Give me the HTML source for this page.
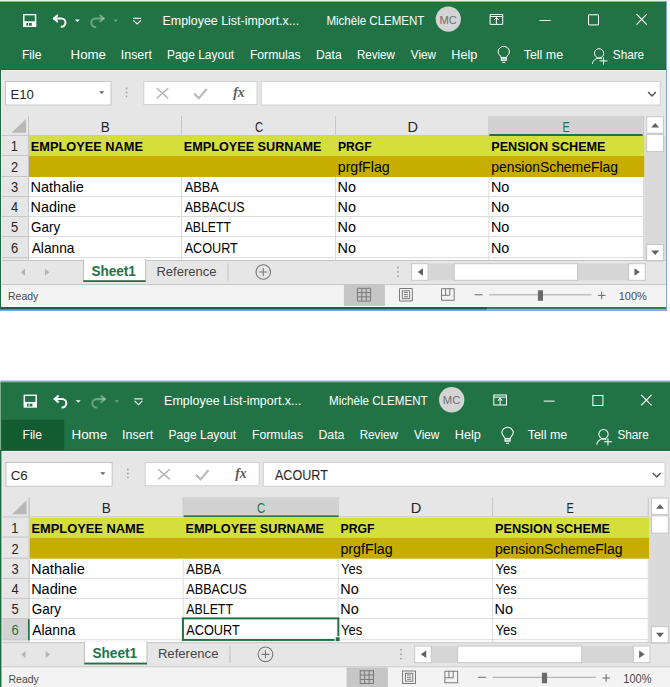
<!DOCTYPE html><html><head><meta charset="utf-8"><style>html,body{margin:0;padding:0;background:#fff;overflow:hidden}</style></head><body><svg width="670" height="687" viewBox="0 0 670 687" style="display:block">
<rect x="0" y="0" width="670" height="687" fill="#fff" />
<rect x="0.00" y="0.00" width="667.00" height="1.00" fill="#e4ebf5" />
<rect x="0.00" y="1.00" width="667.00" height="1.00" fill="#8fb0dd" />
<g><rect x="0.00" y="2.00" width="666.00" height="68.00" fill="#217346" />
<rect x="0.00" y="2.00" width="666.00" height="1.00" fill="#1b6e3d" />
<rect x="0.00" y="69.00" width="666.00" height="1.00" fill="#17693a" />
<rect x="0.00" y="70.00" width="666.00" height="237.00" fill="#e6e6e6" />
<rect x="1.00" y="70.00" width="665.00" height="1.00" fill="#f4f4f4" />
<rect x="1.00" y="70.00" width="1.00" height="236.00" fill="#f0f0f0" />
<rect x="-1.00" y="69.00" width="2.00" height="238.00" fill="#1d6b3f" />
<rect x="23.00" y="14.00" width="13.30" height="13.00" fill="#fff" />
<rect x="24.50" y="15.30" width="10.30" height="6.00" fill="#217346" />
<rect x="26.40" y="23.00" width="5.40" height="2.80" fill="#217346" />
<rect x="28.00" y="23.00" width="1.00" height="2.80" fill="#fff" />
<path d="M53,18.4 H61.3 A4.2,4.2 0 0 1 61.3,26.8 H60.8" stroke="#fff" stroke-width="2" fill="none" />
<path d="M57.8,14.9 L54,18.4 L57.8,21.9" stroke="#fff" stroke-width="2" fill="none" stroke-linejoin="miter"/>
<path d="M74.9,19.5 H79.8 L77.35,22 Z" stroke="none" stroke-width="1" fill="#fff" />
<path d="M104.5,18.5 H95.5 A4.2,4.2 0 0 0 95.5,26.9 H96.2" stroke="#fff" stroke-width="2" fill="none" stroke-opacity="0.35"/>
<path d="M99.7,15 L103.5,18.5 L99.7,22" stroke="#fff" stroke-width="2" fill="none" stroke-opacity="0.35"/>
<path d="M113.3,19.5 H118 L115.65,22 Z" stroke="none" stroke-width="1" fill="#fff" fill-opacity="0.35"/>
<path d="M133,18.3 H141.3" stroke="#fff" stroke-width="1.1" fill="none" />
<path d="M133.3,20.3 L137.15,24 L141,20.3" stroke="#fff" stroke-width="1.1" fill="none" />
<text x="162.58" y="24.80" font-family='"Liberation Sans", sans-serif' font-size="12" font-weight="400" font-style="normal" fill="#fff" textLength="136.55" lengthAdjust="spacingAndGlyphs">Employee List-import.x...</text>
<text x="326.46" y="24.80" font-family='"Liberation Sans", sans-serif' font-size="12" font-weight="400" font-style="normal" fill="#fff" textLength="97.91" lengthAdjust="spacingAndGlyphs">Michèle CLEMENT</text>
<circle cx="448.3" cy="19.1" r="12.6" fill="#d4d4d4"/>
<text x="439.49" y="23.80" font-family='"Liberation Sans", sans-serif' font-size="11.5" font-weight="400" font-style="normal" fill="#707070" textLength="17.34" lengthAdjust="spacingAndGlyphs">MC</text>
<path d="M490.1,14.5 H502.7 V24.4 H490.1 Z" stroke="#fff" stroke-width="1" fill="none" />
<path d="M490.1,16.5 H502.7" stroke="#fff" stroke-width="1" fill="none" />
<path d="M496.4,17.5 V24" stroke="#fff" stroke-width="1" fill="none" />
<path d="M494.2,20 L496.4,17.6 L498.6,20" stroke="#fff" stroke-width="1" fill="none" />
<path d="M539.6,20.5 H550.6" stroke="#fff" stroke-width="1" fill="none" />
<path d="M588.5,14.8 H598.5 V24.9 H588.5 Z" stroke="#fff" stroke-width="1" fill="none" />
<path d="M636.5,14.2 L646.8,24.6 M646.8,14.2 L636.5,24.6" stroke="#fff" stroke-width="1.1" fill="none" />
<text x="21.91" y="58.60" font-family='"Liberation Sans", sans-serif' font-size="12.6" font-weight="400" font-style="normal" fill="#fff" textLength="19.53" lengthAdjust="spacingAndGlyphs">File</text>
<text x="70.61" y="58.60" font-family='"Liberation Sans", sans-serif' font-size="12.6" font-weight="400" font-style="normal" fill="#fff" textLength="35.38" lengthAdjust="spacingAndGlyphs">Home</text>
<text x="120.75" y="58.60" font-family='"Liberation Sans", sans-serif' font-size="12.6" font-weight="400" font-style="normal" fill="#fff" textLength="31.14" lengthAdjust="spacingAndGlyphs">Insert</text>
<text x="166.92" y="58.60" font-family='"Liberation Sans", sans-serif' font-size="12.6" font-weight="400" font-style="normal" fill="#fff" textLength="67.27" lengthAdjust="spacingAndGlyphs">Page Layout</text>
<text x="249.90" y="58.60" font-family='"Liberation Sans", sans-serif' font-size="12.6" font-weight="400" font-style="normal" fill="#fff" textLength="50.74" lengthAdjust="spacingAndGlyphs">Formulas</text>
<text x="316.00" y="58.60" font-family='"Liberation Sans", sans-serif' font-size="12.6" font-weight="400" font-style="normal" fill="#fff" textLength="25.70" lengthAdjust="spacingAndGlyphs">Data</text>
<text x="356.95" y="58.60" font-family='"Liberation Sans", sans-serif' font-size="12.6" font-weight="400" font-style="normal" fill="#fff" textLength="37.82" lengthAdjust="spacingAndGlyphs">Review</text>
<text x="410.85" y="58.60" font-family='"Liberation Sans", sans-serif' font-size="12.6" font-weight="400" font-style="normal" fill="#fff" textLength="25.22" lengthAdjust="spacingAndGlyphs">View</text>
<text x="451.36" y="58.60" font-family='"Liberation Sans", sans-serif' font-size="12.6" font-weight="400" font-style="normal" fill="#fff" textLength="25.97" lengthAdjust="spacingAndGlyphs">Help</text>
<text x="523.73" y="58.60" font-family='"Liberation Sans", sans-serif' font-size="12.6" font-weight="400" font-style="normal" fill="#fff" textLength="39.40" lengthAdjust="spacingAndGlyphs">Tell me</text>
<text x="612.87" y="58.60" font-family='"Liberation Sans", sans-serif' font-size="12.6" font-weight="400" font-style="normal" fill="#fff" textLength="31.25" lengthAdjust="spacingAndGlyphs">Share</text>
<path d="M501.2,57.6 C500.8,55.6 498.1,54.4 498.1,52 A5.65,5.65 0 1 1 509.4,52 C509.4,54.4 506.7,55.6 506.3,57.6 Z" stroke="#fff" stroke-width="1" fill="none" />
<rect x="501.20" y="57.60" width="5.10" height="2.70" fill="#fff" fill-opacity="0.55" stroke="#fff" stroke-width="1"/>
<path d="M502.3,62.4 H505.2" stroke="#fff" stroke-width="1" fill="none" />
<circle cx="599.1" cy="53.3" r="4.6" fill="none" stroke="#fff" stroke-width="1"/>
<path d="M592.3,63.8 C593,60.5 595.5,58.2 599,58.2 C600.2,58.2 601,58.4 602,58.8" stroke="#fff" stroke-width="1" fill="none" />
<path d="M599.6,60.9 H607.4 M603.5,57.3 V64.5" stroke="#fff" stroke-width="1" fill="none" />
<rect x="5.50" y="81.50" width="105.50" height="23.50" fill="#fff" stroke="#c6c6c6" stroke-width="1"/>
<text x="10.42" y="98.50" font-family='"Liberation Sans", sans-serif' font-size="13.5" font-weight="400" font-style="normal" fill="#262626" textLength="23.39" lengthAdjust="spacingAndGlyphs">E10</text>
<path d="M99.2,91.2 H104.2 L101.7,93.9 Z" stroke="none" stroke-width="1" fill="#606060" />
<rect x="125.80" y="87.60" width="1.50" height="1.60" fill="#9b9b9b" />
<rect x="125.80" y="91.60" width="1.50" height="1.60" fill="#9b9b9b" />
<rect x="125.80" y="95.60" width="1.50" height="1.60" fill="#9b9b9b" />
<rect x="143.80" y="81.50" width="113.20" height="23.10" fill="#fff" stroke="#d0d0d0" stroke-width="1"/>
<path d="M156.8,88.2 L168.2,98.2 M168.2,88.2 L156.8,98.2" stroke="#b4b4b4" stroke-width="1.5" fill="none" />
<path d="M194.2,93.6 L198.8,98.2 L206.8,89" stroke="#bababa" stroke-width="2.2" fill="none" />
<text x="233.20" y="97.30" font-family='"Liberation Serif", serif' font-size="15" font-weight="700" font-style="italic" fill="#5a5a5a" textLength="11.33" lengthAdjust="spacingAndGlyphs">fx</text>
<rect x="261.20" y="81.50" width="399.00" height="23.50" fill="#fff" stroke="#d0d0d0" stroke-width="1"/>
<path d="M648.1,91.9 L652,95.9 L655.9,91.9" stroke="#555" stroke-width="1.5" fill="none" />
<rect x="489.40" y="116.00" width="153.20" height="19.00" fill="#d2d2d2" />
<rect x="28.00" y="116.00" width="1.00" height="19.00" fill="#c6c6c6" />
<rect x="181.00" y="116.00" width="1.00" height="19.00" fill="#c6c6c6" />
<rect x="335.00" y="116.00" width="1.00" height="19.00" fill="#c6c6c6" />
<rect x="488.40" y="116.00" width="1.00" height="19.00" fill="#c6c6c6" />
<rect x="643.00" y="116.00" width="1.00" height="19.00" fill="#c6c6c6" />
<rect x="2.00" y="135.00" width="642.50" height="1.00" fill="#c6c6ce" />
<rect x="489.40" y="134.00" width="153.20" height="2.00" fill="#217346" />
<path d="M11.6,132.8 L26,119 L26,132.8 Z" stroke="none" stroke-width="1" fill="#b8b8b8" />
<text x="100.79" y="132.00" font-family='"Liberation Sans", sans-serif' font-size="14" font-weight="400" font-style="normal" fill="#262626" textLength="9.02" lengthAdjust="spacingAndGlyphs">B</text>
<text x="254.92" y="132.00" font-family='"Liberation Sans", sans-serif' font-size="14" font-weight="400" font-style="normal" fill="#262626" textLength="8.21" lengthAdjust="spacingAndGlyphs">C</text>
<text x="407.61" y="132.00" font-family='"Liberation Sans", sans-serif' font-size="14" font-weight="400" font-style="normal" fill="#262626" textLength="10.49" lengthAdjust="spacingAndGlyphs">D</text>
<text x="562.41" y="132.00" font-family='"Liberation Sans", sans-serif' font-size="14" font-weight="400" font-style="normal" fill="#217346" textLength="7.26" lengthAdjust="spacingAndGlyphs">E</text>
<rect x="29.00" y="136.00" width="614.50" height="124.00" fill="#fff" />
<rect x="29.00" y="136.00" width="615.50" height="20.00" fill="#d5df3b" />
<rect x="29.00" y="156.00" width="615.50" height="21.00" fill="#c6ad00" />
<rect x="181.00" y="177.00" width="1.00" height="83.00" fill="#dcdcdc" />
<rect x="335.00" y="177.00" width="1.00" height="83.00" fill="#dcdcdc" />
<rect x="488.40" y="177.00" width="1.00" height="83.00" fill="#dcdcdc" />
<rect x="643.00" y="177.00" width="1.00" height="83.00" fill="#dcdcdc" />
<rect x="29.00" y="196.00" width="614.50" height="1.00" fill="#dcdcdc" />
<rect x="29.00" y="216.00" width="614.50" height="1.00" fill="#dcdcdc" />
<rect x="29.00" y="236.00" width="614.50" height="1.00" fill="#dcdcdc" />
<rect x="29.00" y="257.00" width="614.50" height="1.00" fill="#dcdcdc" />
<rect x="28.00" y="116.00" width="1.00" height="144.00" fill="#c6c6c6" />
<rect x="2.00" y="155.00" width="26.00" height="1.00" fill="#c6c6c6" />
<rect x="2.00" y="176.00" width="26.00" height="1.00" fill="#c6c6c6" />
<rect x="2.00" y="196.00" width="26.00" height="1.00" fill="#c6c6c6" />
<rect x="2.00" y="216.00" width="26.00" height="1.00" fill="#c6c6c6" />
<rect x="2.00" y="236.00" width="26.00" height="1.00" fill="#c6c6c6" />
<rect x="2.00" y="257.00" width="26.00" height="1.00" fill="#c6c6c6" />
<text x="10.84" y="151.20" font-family='"Liberation Sans", sans-serif' font-size="14" font-weight="400" font-style="normal" fill="#262626" textLength="7.16" lengthAdjust="spacingAndGlyphs">1</text>
<text x="11.02" y="172.20" font-family='"Liberation Sans", sans-serif' font-size="14" font-weight="400" font-style="normal" fill="#262626" textLength="7.16" lengthAdjust="spacingAndGlyphs">2</text>
<text x="11.06" y="192.20" font-family='"Liberation Sans", sans-serif' font-size="14" font-weight="400" font-style="normal" fill="#262626" textLength="7.16" lengthAdjust="spacingAndGlyphs">3</text>
<text x="11.06" y="212.20" font-family='"Liberation Sans", sans-serif' font-size="14" font-weight="400" font-style="normal" fill="#262626" textLength="7.16" lengthAdjust="spacingAndGlyphs">4</text>
<text x="11.03" y="232.20" font-family='"Liberation Sans", sans-serif' font-size="14" font-weight="400" font-style="normal" fill="#262626" textLength="7.16" lengthAdjust="spacingAndGlyphs">5</text>
<text x="10.97" y="253.20" font-family='"Liberation Sans", sans-serif' font-size="14" font-weight="400" font-style="normal" fill="#262626" textLength="7.16" lengthAdjust="spacingAndGlyphs">6</text>
<text x="30.85" y="151.40" font-family='"Liberation Sans", sans-serif' font-size="13.5" font-weight="700" font-style="normal" fill="#000" textLength="112.05" lengthAdjust="spacingAndGlyphs">EMPLOYEE NAME</text>
<text x="183.85" y="151.40" font-family='"Liberation Sans", sans-serif' font-size="13.5" font-weight="700" font-style="normal" fill="#000" textLength="137.64" lengthAdjust="spacingAndGlyphs">EMPLOYEE SURNAME</text>
<text x="337.89" y="151.40" font-family='"Liberation Sans", sans-serif' font-size="13.5" font-weight="700" font-style="normal" fill="#000" textLength="33.76" lengthAdjust="spacingAndGlyphs">PRGF</text>
<text x="491.26" y="151.40" font-family='"Liberation Sans", sans-serif' font-size="13.5" font-weight="700" font-style="normal" fill="#000" textLength="114.24" lengthAdjust="spacingAndGlyphs">PENSION SCHEME</text>
<text x="337.79" y="172.10" font-family='"Liberation Sans", sans-serif' font-size="14.4" font-weight="400" font-style="normal" fill="#000" textLength="51.82" lengthAdjust="spacingAndGlyphs">prgfFlag</text>
<text x="491.20" y="172.10" font-family='"Liberation Sans", sans-serif' font-size="14.4" font-weight="400" font-style="normal" fill="#000" textLength="126.79" lengthAdjust="spacingAndGlyphs">pensionSchemeFlag</text>
<text x="30.51" y="192.10" font-family='"Liberation Sans", sans-serif' font-size="14.4" font-weight="400" font-style="normal" fill="#000" textLength="53.34" lengthAdjust="spacingAndGlyphs">Nathalie</text>
<text x="184.67" y="192.10" font-family='"Liberation Sans", sans-serif' font-size="14.4" font-weight="400" font-style="normal" fill="#000" textLength="34.25" lengthAdjust="spacingAndGlyphs">ABBA</text>
<text x="337.52" y="192.10" font-family='"Liberation Sans", sans-serif' font-size="14.4" font-weight="400" font-style="normal" fill="#000" textLength="18.38" lengthAdjust="spacingAndGlyphs">No</text>
<text x="490.92" y="192.10" font-family='"Liberation Sans", sans-serif' font-size="14.4" font-weight="400" font-style="normal" fill="#000" textLength="18.38" lengthAdjust="spacingAndGlyphs">No</text>
<text x="30.52" y="212.10" font-family='"Liberation Sans", sans-serif' font-size="14.4" font-weight="400" font-style="normal" fill="#000" textLength="45.62" lengthAdjust="spacingAndGlyphs">Nadine</text>
<text x="184.68" y="212.10" font-family='"Liberation Sans", sans-serif' font-size="14.4" font-weight="400" font-style="normal" fill="#000" textLength="59.90" lengthAdjust="spacingAndGlyphs">ABBACUS</text>
<text x="337.52" y="212.10" font-family='"Liberation Sans", sans-serif' font-size="14.4" font-weight="400" font-style="normal" fill="#000" textLength="18.38" lengthAdjust="spacingAndGlyphs">No</text>
<text x="490.92" y="212.10" font-family='"Liberation Sans", sans-serif' font-size="14.4" font-weight="400" font-style="normal" fill="#000" textLength="18.38" lengthAdjust="spacingAndGlyphs">No</text>
<text x="31.02" y="232.10" font-family='"Liberation Sans", sans-serif' font-size="14.4" font-weight="400" font-style="normal" fill="#000" textLength="29.10" lengthAdjust="spacingAndGlyphs">Gary</text>
<text x="184.68" y="232.10" font-family='"Liberation Sans", sans-serif' font-size="14.4" font-weight="400" font-style="normal" fill="#000" textLength="46.31" lengthAdjust="spacingAndGlyphs">ABLETT</text>
<text x="337.52" y="232.10" font-family='"Liberation Sans", sans-serif' font-size="14.4" font-weight="400" font-style="normal" fill="#000" textLength="18.38" lengthAdjust="spacingAndGlyphs">No</text>
<text x="490.92" y="232.10" font-family='"Liberation Sans", sans-serif' font-size="14.4" font-weight="400" font-style="normal" fill="#000" textLength="18.38" lengthAdjust="spacingAndGlyphs">No</text>
<text x="31.67" y="253.10" font-family='"Liberation Sans", sans-serif' font-size="14.4" font-weight="400" font-style="normal" fill="#000" textLength="42.83" lengthAdjust="spacingAndGlyphs">Alanna</text>
<text x="184.68" y="253.10" font-family='"Liberation Sans", sans-serif' font-size="14.4" font-weight="400" font-style="normal" fill="#000" textLength="53.11" lengthAdjust="spacingAndGlyphs">ACOURT</text>
<text x="337.52" y="253.10" font-family='"Liberation Sans", sans-serif' font-size="14.4" font-weight="400" font-style="normal" fill="#000" textLength="18.38" lengthAdjust="spacingAndGlyphs">No</text>
<text x="490.92" y="253.10" font-family='"Liberation Sans", sans-serif' font-size="14.4" font-weight="400" font-style="normal" fill="#000" textLength="18.38" lengthAdjust="spacingAndGlyphs">No</text>
<rect x="644.50" y="136.00" width="21.00" height="125.00" fill="#dadada" />
<rect x="646.70" y="116.80" width="16.70" height="16.40" fill="#fff" stroke="#c6c6c6" stroke-width="1"/>
<path d="M651.2,127.4 H659.2 L655.2,123 Z" stroke="none" stroke-width="1" fill="#606060" />
<rect x="646.70" y="134.40" width="16.70" height="17.20" fill="#fff" stroke="#c6c6c6" stroke-width="1"/>
<rect x="646.70" y="244.50" width="16.70" height="16.50" fill="#fff" stroke="#c6c6c6" stroke-width="1"/>
<path d="M651.2,250.6 H659.2 L655.2,255 Z" stroke="none" stroke-width="1" fill="#606060" />
<rect x="2.00" y="260.00" width="664.00" height="1.00" fill="#c6c6c6" />
<path d="M25,268.6 L20.9,272.2 L25,275.8 Z" stroke="none" stroke-width="1" fill="#b5b5b5" />
<path d="M45,268.6 L49.3,272.2 L45,275.8 Z" stroke="none" stroke-width="1" fill="#b5b5b5" />
<rect x="83.50" y="259.50" width="62.10" height="22.00" fill="#fff" stroke="#c0c0c0" stroke-width="1"/>
<rect x="84.00" y="259.00" width="61.10" height="2.00" fill="#fff" />
<rect x="83.30" y="280.20" width="62.30" height="1.80" fill="#217346" />
<text x="91.41" y="275.80" font-family='"Liberation Sans", sans-serif' font-size="14" font-weight="700" font-style="normal" fill="#217346" textLength="44.47" lengthAdjust="spacingAndGlyphs">Sheet1</text>
<text x="156.43" y="275.60" font-family='"Liberation Sans", sans-serif' font-size="13.6" font-weight="400" font-style="normal" fill="#444" textLength="60.15" lengthAdjust="spacingAndGlyphs">Reference</text>
<rect x="227.50" y="263.50" width="1.00" height="17.20" fill="#c0c0c0" />
<circle cx="263.3" cy="272" r="7.3" fill="none" stroke="#777" stroke-width="1.1"/>
<path d="M259.3,272 H267.3 M263.3,268 V276" stroke="#777" stroke-width="1.1" fill="none" />
<rect x="397.20" y="266.70" width="1.50" height="1.60" fill="#9b9b9b" />
<rect x="397.20" y="271.10" width="1.50" height="1.60" fill="#9b9b9b" />
<rect x="397.20" y="275.50" width="1.50" height="1.60" fill="#9b9b9b" />
<rect x="428.10" y="263.50" width="200.40" height="17.00" fill="#d6d6d6" />
<rect x="411.50" y="263.70" width="16.50" height="16.60" fill="#fff" stroke="#c6c6c6" stroke-width="1"/>
<path d="M423,268.3 L417.6,272 L423,275.7 Z" stroke="none" stroke-width="1" fill="#606060" />
<rect x="454.20" y="263.70" width="123.30" height="16.60" fill="#fff" stroke="#c6c6c6" stroke-width="1"/>
<rect x="628.70" y="263.70" width="16.50" height="16.60" fill="#fff" stroke="#c6c6c6" stroke-width="1"/>
<path d="M634.5,268.3 L639.9,272 L634.5,275.7 Z" stroke="none" stroke-width="1" fill="#606060" />
<rect x="2.00" y="284.00" width="664.00" height="1.00" fill="#c6c6c6" />
<rect x="2.00" y="285.00" width="664.00" height="21.00" fill="#f3f3f3" />
<rect x="2.00" y="306.00" width="664.00" height="1.00" fill="#fbfbfb" />
<text x="8.04" y="300.10" font-family='"Liberation Sans", sans-serif' font-size="11.6" font-weight="400" font-style="normal" fill="#4a4a4a" textLength="30.18" lengthAdjust="spacingAndGlyphs">Ready</text>
<rect x="343.90" y="285.00" width="41.00" height="21.00" fill="#c6c6c6" />
<path d="M357.4,288.3 H370.6 V301.1 H357.4 Z M357.4,292.6 H370.6 M357.4,296.9 H370.6 M361.8,288.3 V301.1 M366.2,288.3 V301.1" stroke="#7a7a7a" stroke-width="1" fill="none" />
<path d="M399.5,288.5 H412.3 V301 H399.5 Z M402.3,290.8 H409.6 V298.7 H402.3 Z M403.9,292.6 H408 M403.9,294.7 H408 M403.9,296.8 H408" stroke="#7a7a7a" stroke-width="1" fill="none" />
<path d="M441.5,288.7 H454.2 V300.3 H441.5 Z M441.5,295.3 H449.8 V288.7 M445.6,288.7 V295.3" stroke="#7a7a7a" stroke-width="1" fill="none" />
<rect x="474.60" y="294.30" width="7.90" height="1.00" fill="#6a6a6a" />
<rect x="489.00" y="294.30" width="102.60" height="1.00" fill="#a6a6a6" />
<rect x="537.90" y="290.30" width="5.10" height="10.50" fill="#6a6a6a" />
<path d="M597.9,295.4 H605.5 M601.7,291.6 V299.2" stroke="#6a6a6a" stroke-width="1" fill="none" />
<text x="618.77" y="300.20" font-family='"Liberation Sans", sans-serif' font-size="11.8" font-weight="400" font-style="normal" fill="#4a4a4a" textLength="28.03" lengthAdjust="spacingAndGlyphs">100%</text>
<rect x="666.00" y="1.00" width="1.00" height="310.00" fill="#7ea3d8" />
<rect x="-1.00" y="307.00" width="488.00" height="2.00" fill="#1b623a" />
<rect x="487.00" y="307.00" width="179.00" height="2.00" fill="#2f7d52" />
<rect x="-1.00" y="309.00" width="488.00" height="1.00" fill="#6f8f7c" />
<rect x="487.00" y="309.00" width="179.00" height="1.00" fill="#a9b0ac" />
<rect x="-1.00" y="310.00" width="668.00" height="1.00" fill="#7ea3d8" /></g>
<g transform="translate(0.41,380.5) scale(1.0067)"><rect x="0.00" y="0.00" width="680.00" height="2.00" fill="#86a9da" /><rect x="0.00" y="2.00" width="666.00" height="68.00" fill="#217346" />
<rect x="0.00" y="2.00" width="666.00" height="1.00" fill="#1b6e3d" />
<rect x="1.00" y="39.00" width="62.40" height="30.50" fill="#135c31" />
<rect x="0.00" y="69.00" width="666.00" height="1.00" fill="#17693a" />
<rect x="0.00" y="70.00" width="666.00" height="237.00" fill="#e6e6e6" />
<rect x="1.00" y="70.00" width="665.00" height="1.00" fill="#f4f4f4" />
<rect x="1.00" y="70.00" width="1.00" height="236.00" fill="#f0f0f0" />
<rect x="-1.00" y="69.00" width="2.00" height="238.00" fill="#1d6b3f" />
<rect x="23.00" y="14.00" width="13.30" height="13.00" fill="#fff" />
<rect x="24.50" y="15.30" width="10.30" height="6.00" fill="#217346" />
<rect x="26.40" y="23.00" width="5.40" height="2.80" fill="#217346" />
<rect x="28.00" y="23.00" width="1.00" height="2.80" fill="#fff" />
<path d="M53,18.4 H61.3 A4.2,4.2 0 0 1 61.3,26.8 H60.8" stroke="#fff" stroke-width="2" fill="none" />
<path d="M57.8,14.9 L54,18.4 L57.8,21.9" stroke="#fff" stroke-width="2" fill="none" stroke-linejoin="miter"/>
<path d="M74.9,19.5 H79.8 L77.35,22 Z" stroke="none" stroke-width="1" fill="#fff" />
<path d="M104.5,18.5 H95.5 A4.2,4.2 0 0 0 95.5,26.9 H96.2" stroke="#fff" stroke-width="2" fill="none" stroke-opacity="0.35"/>
<path d="M99.7,15 L103.5,18.5 L99.7,22" stroke="#fff" stroke-width="2" fill="none" stroke-opacity="0.35"/>
<path d="M113.3,19.5 H118 L115.65,22 Z" stroke="none" stroke-width="1" fill="#fff" fill-opacity="0.35"/>
<path d="M133,18.3 H141.3" stroke="#fff" stroke-width="1.1" fill="none" />
<path d="M133.3,20.3 L137.15,24 L141,20.3" stroke="#fff" stroke-width="1.1" fill="none" />
<text x="162.58" y="24.80" font-family='"Liberation Sans", sans-serif' font-size="12" font-weight="400" font-style="normal" fill="#fff" textLength="136.55" lengthAdjust="spacingAndGlyphs">Employee List-import.x...</text>
<text x="326.46" y="24.80" font-family='"Liberation Sans", sans-serif' font-size="12" font-weight="400" font-style="normal" fill="#fff" textLength="97.91" lengthAdjust="spacingAndGlyphs">Michèle CLEMENT</text>
<circle cx="448.3" cy="19.1" r="12.6" fill="#d4d4d4"/>
<text x="439.49" y="23.80" font-family='"Liberation Sans", sans-serif' font-size="11.5" font-weight="400" font-style="normal" fill="#707070" textLength="17.34" lengthAdjust="spacingAndGlyphs">MC</text>
<path d="M490.1,14.5 H502.7 V24.4 H490.1 Z" stroke="#fff" stroke-width="1" fill="none" />
<path d="M490.1,16.5 H502.7" stroke="#fff" stroke-width="1" fill="none" />
<path d="M496.4,17.5 V24" stroke="#fff" stroke-width="1" fill="none" />
<path d="M494.2,20 L496.4,17.6 L498.6,20" stroke="#fff" stroke-width="1" fill="none" />
<path d="M539.6,20.5 H550.6" stroke="#fff" stroke-width="1" fill="none" />
<path d="M588.5,14.8 H598.5 V24.9 H588.5 Z" stroke="#fff" stroke-width="1" fill="none" />
<path d="M636.5,14.2 L646.8,24.6 M646.8,14.2 L636.5,24.6" stroke="#fff" stroke-width="1.1" fill="none" />
<text x="21.91" y="58.60" font-family='"Liberation Sans", sans-serif' font-size="12.6" font-weight="400" font-style="normal" fill="#fff" textLength="19.53" lengthAdjust="spacingAndGlyphs">File</text>
<text x="70.61" y="58.60" font-family='"Liberation Sans", sans-serif' font-size="12.6" font-weight="400" font-style="normal" fill="#fff" textLength="35.38" lengthAdjust="spacingAndGlyphs">Home</text>
<text x="120.75" y="58.60" font-family='"Liberation Sans", sans-serif' font-size="12.6" font-weight="400" font-style="normal" fill="#fff" textLength="31.14" lengthAdjust="spacingAndGlyphs">Insert</text>
<text x="166.92" y="58.60" font-family='"Liberation Sans", sans-serif' font-size="12.6" font-weight="400" font-style="normal" fill="#fff" textLength="67.27" lengthAdjust="spacingAndGlyphs">Page Layout</text>
<text x="249.90" y="58.60" font-family='"Liberation Sans", sans-serif' font-size="12.6" font-weight="400" font-style="normal" fill="#fff" textLength="50.74" lengthAdjust="spacingAndGlyphs">Formulas</text>
<text x="316.00" y="58.60" font-family='"Liberation Sans", sans-serif' font-size="12.6" font-weight="400" font-style="normal" fill="#fff" textLength="25.70" lengthAdjust="spacingAndGlyphs">Data</text>
<text x="356.95" y="58.60" font-family='"Liberation Sans", sans-serif' font-size="12.6" font-weight="400" font-style="normal" fill="#fff" textLength="37.82" lengthAdjust="spacingAndGlyphs">Review</text>
<text x="410.85" y="58.60" font-family='"Liberation Sans", sans-serif' font-size="12.6" font-weight="400" font-style="normal" fill="#fff" textLength="25.22" lengthAdjust="spacingAndGlyphs">View</text>
<text x="451.36" y="58.60" font-family='"Liberation Sans", sans-serif' font-size="12.6" font-weight="400" font-style="normal" fill="#fff" textLength="25.97" lengthAdjust="spacingAndGlyphs">Help</text>
<text x="523.73" y="58.60" font-family='"Liberation Sans", sans-serif' font-size="12.6" font-weight="400" font-style="normal" fill="#fff" textLength="39.40" lengthAdjust="spacingAndGlyphs">Tell me</text>
<text x="612.87" y="58.60" font-family='"Liberation Sans", sans-serif' font-size="12.6" font-weight="400" font-style="normal" fill="#fff" textLength="31.25" lengthAdjust="spacingAndGlyphs">Share</text>
<path d="M501.2,57.6 C500.8,55.6 498.1,54.4 498.1,52 A5.65,5.65 0 1 1 509.4,52 C509.4,54.4 506.7,55.6 506.3,57.6 Z" stroke="#fff" stroke-width="1" fill="none" />
<rect x="501.20" y="57.60" width="5.10" height="2.70" fill="#fff" fill-opacity="0.55" stroke="#fff" stroke-width="1"/>
<path d="M502.3,62.4 H505.2" stroke="#fff" stroke-width="1" fill="none" />
<circle cx="599.1" cy="53.3" r="4.6" fill="none" stroke="#fff" stroke-width="1"/>
<path d="M592.3,63.8 C593,60.5 595.5,58.2 599,58.2 C600.2,58.2 601,58.4 602,58.8" stroke="#fff" stroke-width="1" fill="none" />
<path d="M599.6,60.9 H607.4 M603.5,57.3 V64.5" stroke="#fff" stroke-width="1" fill="none" />
<rect x="5.50" y="81.50" width="105.50" height="23.50" fill="#fff" stroke="#c6c6c6" stroke-width="1"/>
<text x="10.23" y="98.50" font-family='"Liberation Sans", sans-serif' font-size="13.5" font-weight="400" font-style="normal" fill="#262626" textLength="16.96" lengthAdjust="spacingAndGlyphs">C6</text>
<path d="M99.2,91.2 H104.2 L101.7,93.9 Z" stroke="none" stroke-width="1" fill="#606060" />
<rect x="125.80" y="87.60" width="1.50" height="1.60" fill="#9b9b9b" />
<rect x="125.80" y="91.60" width="1.50" height="1.60" fill="#9b9b9b" />
<rect x="125.80" y="95.60" width="1.50" height="1.60" fill="#9b9b9b" />
<rect x="143.80" y="81.50" width="113.20" height="23.10" fill="#fff" stroke="#d0d0d0" stroke-width="1"/>
<path d="M156.8,88.2 L168.2,98.2 M168.2,88.2 L156.8,98.2" stroke="#b4b4b4" stroke-width="1.5" fill="none" />
<path d="M194.2,93.6 L198.8,98.2 L206.8,89" stroke="#bababa" stroke-width="2.2" fill="none" />
<text x="233.20" y="97.30" font-family='"Liberation Serif", serif' font-size="15" font-weight="700" font-style="italic" fill="#5a5a5a" textLength="11.33" lengthAdjust="spacingAndGlyphs">fx</text>
<rect x="261.20" y="81.50" width="399.00" height="23.50" fill="#fff" stroke="#d0d0d0" stroke-width="1"/>
<text x="272.68" y="98.40" font-family='"Liberation Sans", sans-serif' font-size="14" font-weight="400" font-style="normal" fill="#262626" textLength="52.61" lengthAdjust="spacingAndGlyphs">ACOURT</text>
<path d="M648.1,91.9 L652,95.9 L655.9,91.9" stroke="#555" stroke-width="1.5" fill="none" />
<rect x="182.00" y="116.00" width="153.00" height="19.00" fill="#d2d2d2" />
<rect x="28.00" y="116.00" width="1.00" height="19.00" fill="#c6c6c6" />
<rect x="181.00" y="116.00" width="1.00" height="19.00" fill="#c6c6c6" />
<rect x="335.00" y="116.00" width="1.00" height="19.00" fill="#c6c6c6" />
<rect x="488.40" y="116.00" width="1.00" height="19.00" fill="#c6c6c6" />
<rect x="643.00" y="116.00" width="1.00" height="19.00" fill="#c6c6c6" />
<rect x="2.00" y="135.00" width="642.50" height="1.00" fill="#c6c6ce" />
<rect x="182.00" y="134.00" width="154.00" height="2.00" fill="#217346" />
<path d="M11.6,132.8 L26,119 L26,132.8 Z" stroke="none" stroke-width="1" fill="#b8b8b8" />
<text x="100.79" y="132.00" font-family='"Liberation Sans", sans-serif' font-size="14" font-weight="400" font-style="normal" fill="#262626" textLength="9.02" lengthAdjust="spacingAndGlyphs">B</text>
<text x="254.92" y="132.00" font-family='"Liberation Sans", sans-serif' font-size="14" font-weight="400" font-style="normal" fill="#217346" textLength="8.21" lengthAdjust="spacingAndGlyphs">C</text>
<text x="407.61" y="132.00" font-family='"Liberation Sans", sans-serif' font-size="14" font-weight="400" font-style="normal" fill="#262626" textLength="10.49" lengthAdjust="spacingAndGlyphs">D</text>
<text x="562.41" y="132.00" font-family='"Liberation Sans", sans-serif' font-size="14" font-weight="400" font-style="normal" fill="#262626" textLength="7.26" lengthAdjust="spacingAndGlyphs">E</text>
<rect x="29.00" y="136.00" width="614.50" height="124.00" fill="#fff" />
<rect x="29.00" y="136.00" width="615.50" height="20.00" fill="#d5df3b" />
<rect x="29.00" y="156.00" width="615.50" height="21.00" fill="#c6ad00" />
<rect x="181.00" y="177.00" width="1.00" height="83.00" fill="#dcdcdc" />
<rect x="335.00" y="177.00" width="1.00" height="83.00" fill="#dcdcdc" />
<rect x="488.40" y="177.00" width="1.00" height="83.00" fill="#dcdcdc" />
<rect x="643.00" y="177.00" width="1.00" height="83.00" fill="#dcdcdc" />
<rect x="29.00" y="196.00" width="614.50" height="1.00" fill="#dcdcdc" />
<rect x="29.00" y="216.00" width="614.50" height="1.00" fill="#dcdcdc" />
<rect x="29.00" y="236.00" width="614.50" height="1.00" fill="#dcdcdc" />
<rect x="29.00" y="257.00" width="614.50" height="1.00" fill="#dcdcdc" />
<rect x="2.00" y="237.00" width="26.00" height="20.00" fill="#d2d2d2" />
<rect x="28.00" y="116.00" width="1.00" height="144.00" fill="#c6c6c6" />
<rect x="2.00" y="155.00" width="26.00" height="1.00" fill="#c6c6c6" />
<rect x="2.00" y="176.00" width="26.00" height="1.00" fill="#c6c6c6" />
<rect x="2.00" y="196.00" width="26.00" height="1.00" fill="#c6c6c6" />
<rect x="2.00" y="216.00" width="26.00" height="1.00" fill="#c6c6c6" />
<rect x="2.00" y="236.00" width="26.00" height="1.00" fill="#c6c6c6" />
<rect x="2.00" y="257.00" width="26.00" height="1.00" fill="#c6c6c6" />
<rect x="27.40" y="237.00" width="1.60" height="21.00" fill="#217346" />
<text x="10.84" y="151.20" font-family='"Liberation Sans", sans-serif' font-size="14" font-weight="400" font-style="normal" fill="#262626" textLength="7.16" lengthAdjust="spacingAndGlyphs">1</text>
<text x="11.02" y="172.20" font-family='"Liberation Sans", sans-serif' font-size="14" font-weight="400" font-style="normal" fill="#262626" textLength="7.16" lengthAdjust="spacingAndGlyphs">2</text>
<text x="11.06" y="192.20" font-family='"Liberation Sans", sans-serif' font-size="14" font-weight="400" font-style="normal" fill="#262626" textLength="7.16" lengthAdjust="spacingAndGlyphs">3</text>
<text x="11.06" y="212.20" font-family='"Liberation Sans", sans-serif' font-size="14" font-weight="400" font-style="normal" fill="#262626" textLength="7.16" lengthAdjust="spacingAndGlyphs">4</text>
<text x="11.03" y="232.20" font-family='"Liberation Sans", sans-serif' font-size="14" font-weight="400" font-style="normal" fill="#262626" textLength="7.16" lengthAdjust="spacingAndGlyphs">5</text>
<text x="10.97" y="253.20" font-family='"Liberation Sans", sans-serif' font-size="14" font-weight="400" font-style="normal" fill="#217346" textLength="7.16" lengthAdjust="spacingAndGlyphs">6</text>
<text x="30.85" y="151.40" font-family='"Liberation Sans", sans-serif' font-size="13.5" font-weight="700" font-style="normal" fill="#000" textLength="112.05" lengthAdjust="spacingAndGlyphs">EMPLOYEE NAME</text>
<text x="183.85" y="151.40" font-family='"Liberation Sans", sans-serif' font-size="13.5" font-weight="700" font-style="normal" fill="#000" textLength="137.64" lengthAdjust="spacingAndGlyphs">EMPLOYEE SURNAME</text>
<text x="337.89" y="151.40" font-family='"Liberation Sans", sans-serif' font-size="13.5" font-weight="700" font-style="normal" fill="#000" textLength="33.76" lengthAdjust="spacingAndGlyphs">PRGF</text>
<text x="491.26" y="151.40" font-family='"Liberation Sans", sans-serif' font-size="13.5" font-weight="700" font-style="normal" fill="#000" textLength="114.24" lengthAdjust="spacingAndGlyphs">PENSION SCHEME</text>
<text x="337.79" y="172.10" font-family='"Liberation Sans", sans-serif' font-size="14.4" font-weight="400" font-style="normal" fill="#000" textLength="51.82" lengthAdjust="spacingAndGlyphs">prgfFlag</text>
<text x="491.20" y="172.10" font-family='"Liberation Sans", sans-serif' font-size="14.4" font-weight="400" font-style="normal" fill="#000" textLength="126.79" lengthAdjust="spacingAndGlyphs">pensionSchemeFlag</text>
<text x="30.51" y="192.10" font-family='"Liberation Sans", sans-serif' font-size="14.4" font-weight="400" font-style="normal" fill="#000" textLength="53.34" lengthAdjust="spacingAndGlyphs">Nathalie</text>
<text x="184.67" y="192.10" font-family='"Liberation Sans", sans-serif' font-size="14.4" font-weight="400" font-style="normal" fill="#000" textLength="34.25" lengthAdjust="spacingAndGlyphs">ABBA</text>
<text x="338.43" y="192.10" font-family='"Liberation Sans", sans-serif' font-size="14.4" font-weight="400" font-style="normal" fill="#000" textLength="21.11" lengthAdjust="spacingAndGlyphs">Yes</text>
<text x="491.83" y="192.10" font-family='"Liberation Sans", sans-serif' font-size="14.4" font-weight="400" font-style="normal" fill="#000" textLength="21.11" lengthAdjust="spacingAndGlyphs">Yes</text>
<text x="30.52" y="212.10" font-family='"Liberation Sans", sans-serif' font-size="14.4" font-weight="400" font-style="normal" fill="#000" textLength="45.62" lengthAdjust="spacingAndGlyphs">Nadine</text>
<text x="184.68" y="212.10" font-family='"Liberation Sans", sans-serif' font-size="14.4" font-weight="400" font-style="normal" fill="#000" textLength="59.90" lengthAdjust="spacingAndGlyphs">ABBACUS</text>
<text x="337.52" y="212.10" font-family='"Liberation Sans", sans-serif' font-size="14.4" font-weight="400" font-style="normal" fill="#000" textLength="18.38" lengthAdjust="spacingAndGlyphs">No</text>
<text x="491.83" y="212.10" font-family='"Liberation Sans", sans-serif' font-size="14.4" font-weight="400" font-style="normal" fill="#000" textLength="21.11" lengthAdjust="spacingAndGlyphs">Yes</text>
<text x="31.02" y="232.10" font-family='"Liberation Sans", sans-serif' font-size="14.4" font-weight="400" font-style="normal" fill="#000" textLength="29.10" lengthAdjust="spacingAndGlyphs">Gary</text>
<text x="184.68" y="232.10" font-family='"Liberation Sans", sans-serif' font-size="14.4" font-weight="400" font-style="normal" fill="#000" textLength="46.31" lengthAdjust="spacingAndGlyphs">ABLETT</text>
<text x="337.52" y="232.10" font-family='"Liberation Sans", sans-serif' font-size="14.4" font-weight="400" font-style="normal" fill="#000" textLength="18.38" lengthAdjust="spacingAndGlyphs">No</text>
<text x="490.92" y="232.10" font-family='"Liberation Sans", sans-serif' font-size="14.4" font-weight="400" font-style="normal" fill="#000" textLength="18.38" lengthAdjust="spacingAndGlyphs">No</text>
<text x="31.67" y="253.10" font-family='"Liberation Sans", sans-serif' font-size="14.4" font-weight="400" font-style="normal" fill="#000" textLength="42.83" lengthAdjust="spacingAndGlyphs">Alanna</text>
<text x="184.68" y="253.10" font-family='"Liberation Sans", sans-serif' font-size="14.4" font-weight="400" font-style="normal" fill="#000" textLength="53.11" lengthAdjust="spacingAndGlyphs">ACOURT</text>
<text x="338.43" y="253.10" font-family='"Liberation Sans", sans-serif' font-size="14.4" font-weight="400" font-style="normal" fill="#000" textLength="21.11" lengthAdjust="spacingAndGlyphs">Yes</text>
<text x="491.83" y="253.10" font-family='"Liberation Sans", sans-serif' font-size="14.4" font-weight="400" font-style="normal" fill="#000" textLength="21.11" lengthAdjust="spacingAndGlyphs">Yes</text>
<rect x="181.30" y="236.30" width="154.40" height="21.40" fill="none" stroke="#217346" stroke-width="2"/>
<rect x="332.50" y="254.50" width="5.00" height="5.00" fill="#217346" stroke="#fff" stroke-width="1"/>
<rect x="644.50" y="136.00" width="21.00" height="125.00" fill="#dadada" />
<rect x="646.70" y="116.80" width="16.70" height="16.40" fill="#fff" stroke="#c6c6c6" stroke-width="1"/>
<path d="M651.2,127.4 H659.2 L655.2,123 Z" stroke="none" stroke-width="1" fill="#606060" />
<rect x="646.70" y="134.40" width="16.70" height="17.20" fill="#fff" stroke="#c6c6c6" stroke-width="1"/>
<rect x="646.70" y="244.50" width="16.70" height="16.50" fill="#fff" stroke="#c6c6c6" stroke-width="1"/>
<path d="M651.2,250.6 H659.2 L655.2,255 Z" stroke="none" stroke-width="1" fill="#606060" />
<rect x="2.00" y="260.00" width="664.00" height="1.00" fill="#c6c6c6" />
<path d="M25,268.6 L20.9,272.2 L25,275.8 Z" stroke="none" stroke-width="1" fill="#b5b5b5" />
<path d="M45,268.6 L49.3,272.2 L45,275.8 Z" stroke="none" stroke-width="1" fill="#b5b5b5" />
<rect x="83.50" y="259.50" width="62.10" height="22.00" fill="#fff" stroke="#c0c0c0" stroke-width="1"/>
<rect x="84.00" y="259.00" width="61.10" height="2.00" fill="#fff" />
<rect x="83.30" y="280.20" width="62.30" height="1.80" fill="#217346" />
<text x="91.41" y="275.80" font-family='"Liberation Sans", sans-serif' font-size="14" font-weight="700" font-style="normal" fill="#217346" textLength="44.47" lengthAdjust="spacingAndGlyphs">Sheet1</text>
<text x="156.43" y="275.60" font-family='"Liberation Sans", sans-serif' font-size="13.6" font-weight="400" font-style="normal" fill="#444" textLength="60.15" lengthAdjust="spacingAndGlyphs">Reference</text>
<rect x="227.50" y="263.50" width="1.00" height="17.20" fill="#c0c0c0" />
<circle cx="263.3" cy="272" r="7.3" fill="none" stroke="#777" stroke-width="1.1"/>
<path d="M259.3,272 H267.3 M263.3,268 V276" stroke="#777" stroke-width="1.1" fill="none" />
<rect x="397.20" y="266.70" width="1.50" height="1.60" fill="#9b9b9b" />
<rect x="397.20" y="271.10" width="1.50" height="1.60" fill="#9b9b9b" />
<rect x="397.20" y="275.50" width="1.50" height="1.60" fill="#9b9b9b" />
<rect x="428.10" y="263.50" width="200.40" height="17.00" fill="#d6d6d6" />
<rect x="411.50" y="263.70" width="16.50" height="16.60" fill="#fff" stroke="#c6c6c6" stroke-width="1"/>
<path d="M423,268.3 L417.6,272 L423,275.7 Z" stroke="none" stroke-width="1" fill="#606060" />
<rect x="454.20" y="263.70" width="123.30" height="16.60" fill="#fff" stroke="#c6c6c6" stroke-width="1"/>
<rect x="628.70" y="263.70" width="16.50" height="16.60" fill="#fff" stroke="#c6c6c6" stroke-width="1"/>
<path d="M634.5,268.3 L639.9,272 L634.5,275.7 Z" stroke="none" stroke-width="1" fill="#606060" />
<rect x="2.00" y="284.00" width="664.00" height="1.00" fill="#c6c6c6" />
<rect x="2.00" y="285.00" width="664.00" height="21.00" fill="#f3f3f3" />
<rect x="2.00" y="306.00" width="664.00" height="1.00" fill="#fbfbfb" />
<text x="8.04" y="300.10" font-family='"Liberation Sans", sans-serif' font-size="11.6" font-weight="400" font-style="normal" fill="#4a4a4a" textLength="30.18" lengthAdjust="spacingAndGlyphs">Ready</text>
<rect x="343.90" y="285.00" width="41.00" height="21.00" fill="#c6c6c6" />
<path d="M357.4,288.3 H370.6 V301.1 H357.4 Z M357.4,292.6 H370.6 M357.4,296.9 H370.6 M361.8,288.3 V301.1 M366.2,288.3 V301.1" stroke="#7a7a7a" stroke-width="1" fill="none" />
<path d="M399.5,288.5 H412.3 V301 H399.5 Z M402.3,290.8 H409.6 V298.7 H402.3 Z M403.9,292.6 H408 M403.9,294.7 H408 M403.9,296.8 H408" stroke="#7a7a7a" stroke-width="1" fill="none" />
<path d="M441.5,288.7 H454.2 V300.3 H441.5 Z M441.5,295.3 H449.8 V288.7 M445.6,288.7 V295.3" stroke="#7a7a7a" stroke-width="1" fill="none" />
<rect x="474.60" y="294.30" width="7.90" height="1.00" fill="#6a6a6a" />
<rect x="489.00" y="294.30" width="102.60" height="1.00" fill="#a6a6a6" />
<rect x="537.90" y="290.30" width="5.10" height="10.50" fill="#6a6a6a" />
<path d="M597.9,295.4 H605.5 M601.7,291.6 V299.2" stroke="#6a6a6a" stroke-width="1" fill="none" />
<text x="618.77" y="300.20" font-family='"Liberation Sans", sans-serif' font-size="11.8" font-weight="400" font-style="normal" fill="#4a4a4a" textLength="28.03" lengthAdjust="spacingAndGlyphs">100%</text>
<rect x="666.00" y="1.00" width="1.00" height="310.00" fill="#7ea3d8" />
<rect x="-1.00" y="307.00" width="488.00" height="2.00" fill="#1b623a" />
<rect x="487.00" y="307.00" width="179.00" height="2.00" fill="#2f7d52" />
<rect x="-1.00" y="309.00" width="488.00" height="1.00" fill="#6f8f7c" />
<rect x="487.00" y="309.00" width="179.00" height="1.00" fill="#a9b0ac" />
<rect x="-1.00" y="310.00" width="668.00" height="1.00" fill="#7ea3d8" /></g>
</svg></body></html>
